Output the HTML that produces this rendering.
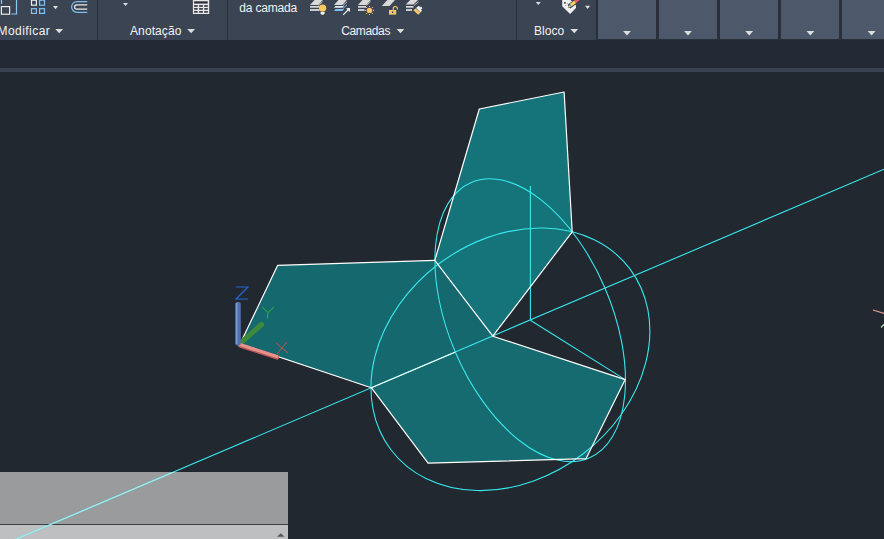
<!DOCTYPE html>
<html><head><meta charset="utf-8">
<style>
html,body{margin:0;padding:0;background:#212830;}
body{width:884px;height:539px;overflow:hidden;position:relative;font-family:"Liberation Sans",sans-serif;font-size:12px;color:#f0f0f0;}
#ribbon{position:absolute;left:0;top:0;width:884px;height:40px;background:#3b4453;}
#band{position:absolute;left:0;top:40px;width:884px;height:28px;background:#232a35;}
#stripe{position:absolute;left:0;top:68px;width:884px;height:4px;background:#3a4150;}
.sep{position:absolute;top:0;width:1px;height:40px;background:#2a303b;}
.lbl{position:absolute;top:24px;line-height:14px;white-space:nowrap;color:#f2f2f2;}
.tri{position:absolute;width:0;height:0;border-left:4px solid transparent;border-right:4px solid transparent;border-top:4.5px solid #dcdcdc;}
.tris{position:absolute;width:0;height:0;border-left:2.5px solid transparent;border-right:2.5px solid transparent;border-top:3px solid #dcdcdc;}
.pan{position:absolute;top:0;height:39px;width:58px;background:#4d596b;}
#panbg{position:absolute;left:596px;top:0;width:288px;height:40px;background:#2a303b;}
#cmd{position:absolute;left:0;top:472px;width:288px;height:52px;background:#9a9b9d;}
#cmdline{position:absolute;left:0;top:524px;width:288px;height:1px;background:#3a3e45;}
#cmd2{position:absolute;left:0;top:525px;width:288px;height:14px;background:#bdbfc1;}
svg{position:absolute;left:0;top:0;}
</style></head><body>
<div id="ribbon"></div>
<div id="band"></div>
<div id="stripe"></div>
<div class="sep" style="left:97px"></div>
<div class="sep" style="left:227px"></div>
<div class="sep" style="left:516px"></div>
<div id="panbg"></div>
<div class="pan" style="left:598px"></div>
<div class="pan" style="left:659px"></div>
<div class="pan" style="left:720px"></div>
<div class="pan" style="left:781px"></div>
<div class="pan" style="left:842px"></div>

<div class="lbl" style="left:-2.5px;letter-spacing:0.45px">Modificar</div>
<div class="lbl" style="left:130px;letter-spacing:0.1px">Anotação</div>
<div class="lbl" style="left:239.3px;top:1px;letter-spacing:-0.2px">da camada</div>
<div class="lbl" style="left:341.2px;letter-spacing:-0.35px">Camadas</div>
<div class="lbl" style="left:534px;letter-spacing:0.05px">Bloco</div>

<svg id="icons" width="884" height="40" viewBox="0 0 884 40" fill="none">
<polygon points="55.3,28.9 63.1,28.9 59.150000000000006,33.199999999999996" fill="#dedede"/>
<polygon points="187.2,28.9 195.0,28.9 191.10000000000002,33.199999999999996" fill="#dedede"/>
<polygon points="396.6,28.9 404.3,28.9 400.45,33.199999999999996" fill="#dedede"/>
<polygon points="570.4,28.9 578.2,28.9 574.3,33.199999999999996" fill="#dedede"/>
<polygon points="623.1,31.1 630.9,31.1 627,35.4" fill="#dedede"/>
<polygon points="684.1,31.1 691.9,31.1 688,35.4" fill="#dedede"/>
<polygon points="745.3,31.1 753.1,31.1 749.2,35.4" fill="#dedede"/>
<polygon points="806.5,31.1 814.3,31.1 810.4,35.4" fill="#dedede"/>
<polygon points="867.7,31.1 875.5,31.1 871.6,35.4" fill="#dedede"/>
<polygon points="53.0,6.1 58.0,6.1 55.5,9.2" fill="#dedede"/>
<polygon points="123.0,3 128.0,3 125.5,6.1" fill="#dedede"/>
<polygon points="535.8,2 540.8,2 538.3,5.1" fill="#dedede"/>
<polygon points="585.1,5.8 590.1,5.8 587.6,8.9" fill="#dedede"/>
<!-- icon1 -->
<rect x="1.4" y="6.6" width="8.2" height="7.6" stroke="#ececec" stroke-width="1.2"/>
<polyline points="11.3,14 16.5,14 16.5,0" stroke="#8cc6f2" stroke-width="1.2"/>
<line x1="1.5" y1="0" x2="1.5" y2="4" stroke="#8cc6f2" stroke-width="1.2"/>
<!-- grid -->
<rect x="31.5" y="0.2" width="4.9" height="5" stroke="#ececec" stroke-width="1.2"/>
<rect x="39.6" y="0.2" width="4.9" height="5" stroke="#86c0f0" stroke-width="1.2"/>
<rect x="31.5" y="8.7" width="4.9" height="4.7" stroke="#86c0f0" stroke-width="1.2"/>
<rect x="39.6" y="8.7" width="4.9" height="4.7" stroke="#86c0f0" stroke-width="1.2"/>
<!-- offset icon -->
<path d="M87.2,1.6 H77 A5.35,5.35 0 0 0 77,12.3 H87.2" stroke="#7fbdee" stroke-width="1.2"/>
<path d="M87.2,4.8 H76.8 A2.2,2.2 0 0 0 76.8,9.2 H87.2" stroke="#ececec" stroke-width="1.2"/>
<!-- table -->
<rect x="192.9" y="0" width="16.3" height="14" fill="#e8e8e8"/>
<g fill="#2b303b">
<rect x="194.1" y="1.3" width="13.6" height="2.3"/>
<rect x="194.1" y="5.2" width="3.6" height="1.6"/><rect x="199.1" y="5.2" width="3.8" height="1.6"/><rect x="204.2" y="5.2" width="3.6" height="1.6"/>
<rect x="194.1" y="8.1" width="3.6" height="1.6"/><rect x="199.1" y="8.1" width="3.8" height="1.6"/><rect x="204.2" y="8.1" width="3.6" height="1.6"/>
<rect x="194.1" y="11.1" width="3.6" height="1.6"/><rect x="199.1" y="11.1" width="3.8" height="1.6"/><rect x="204.2" y="11.1" width="3.6" height="1.6"/>
</g>
<!-- layer icon 1 : bulb -->
<g fill="#d9d9d9">
<polygon points="310,5 314.5,0 322.8,0 318.3,5"/>
<rect x="310" y="6" width="9.5" height="1.7"/><rect x="310" y="9.1" width="9.5" height="1.8"/>
</g>
<line x1="318.5" y1="5.5" x2="322.5" y2="1.8" stroke="#d9d9d9" stroke-width="0.8"/>
<circle cx="322.6" cy="8.1" r="3.7" fill="#f9c764"/>
<path d="M320.6,12.1 H324.6 V13.2 L323.5,14.7 H321.7 L320.6,13.2 Z" fill="#f4f4f4"/>
<!-- layer icon 2 : arrow -->
<polygon points="334,5 338.5,0 346.8,0 342.3,5" fill="#d9d9d9"/>
<polygon points="334,7.7 342.5,7.7 344,6 335.5,6" fill="#e4eef6"/>
<polygon points="334,10.9 342.5,10.9 344,9.1 335.5,9.1" fill="#7fbdee"/>
<line x1="343" y1="5.5" x2="347" y2="1.8" stroke="#d9d9d9" stroke-width="0.8"/>
<line x1="343" y1="8.5" x2="347" y2="4.8" stroke="#a8cdea" stroke-width="0.8"/>
<line x1="343.2" y1="14.8" x2="349" y2="9" stroke="#f4f4f4" stroke-width="1.2"/>
<polygon points="350,8 349.8,12 346,8.2" fill="#f4f4f4"/>
<!-- layer icon 3 : sun -->
<g fill="#d9d9d9">
<polygon points="358,5 362.5,0 370.8,0 366.3,5"/>
<rect x="358" y="6" width="8" height="1.7"/><rect x="358" y="9.1" width="6.5" height="1.8"/>
</g>
<line x1="366.5" y1="5.5" x2="370.5" y2="1.8" stroke="#d9d9d9" stroke-width="0.8"/>
<circle cx="369.5" cy="10.4" r="2.7" fill="#f9c764"/>
<g fill="#f9c764">
<circle cx="369.5" cy="6.3" r="0.6"/><circle cx="369.5" cy="14.5" r="0.6"/><circle cx="365.4" cy="10.4" r="0.6"/><circle cx="373.6" cy="10.4" r="0.6"/>
<circle cx="366.6" cy="7.5" r="0.6"/><circle cx="372.4" cy="7.5" r="0.6"/><circle cx="366.6" cy="13.3" r="0.6"/><circle cx="372.4" cy="13.3" r="0.6"/>
</g>
<!-- layer icon 4 : lock -->
<polygon points="381.8,5.9 387.3,0 395,0 389.5,5.9" fill="#d9d9d9"/>
<rect x="389" y="10" width="7.2" height="4.6" fill="#f9c764"/>
<rect x="391.9" y="11.4" width="1.4" height="1.6" fill="#3b4453"/>
<path d="M393.2,10 V8.6 A2.1,2.1 0 0 1 397.4,8.6 V9.4" stroke="#f9c764" stroke-width="1.1"/>
<!-- layer icon 5 : brush -->
<g fill="#d9d9d9">
<polygon points="405.7,4.6 410.2,0 418,0 413.5,4.6"/>
<rect x="406" y="6" width="7.5" height="1.7"/><rect x="406" y="9.1" width="6" height="1.8"/>
</g>
<line x1="414" y1="5.5" x2="418.5" y2="1.8" stroke="#d9d9d9" stroke-width="0.8"/>
<polygon points="413.4,10.3 415.6,8.4 420.6,12.6 418.2,14.8" fill="#f9c764"/>
<polygon points="416,8 418.8,5.8 420.2,7.2 421.4,6.4 422.4,8.4 421,9.2 422,10.8 420.6,12.2" fill="#eeeeee"/>
<!-- tag icon -->
<polygon points="562.2,0 570.5,0 576,5.5 576,8 570.1,13.9 562.2,6.2" fill="#f0f0f0"/>
<circle cx="564.9" cy="2.8" r="0.9" fill="#222"/>
<circle cx="565.6" cy="5.4" r="0.45" fill="#555"/>
<circle cx="567.6" cy="3.4" r="0.45" fill="#555"/>
<line x1="569" y1="6.6" x2="578.5" y2="-0.6" stroke="#3b4453" stroke-width="4.6"/>
<line x1="570.6" y1="5.3" x2="575.2" y2="1.7" stroke="#f6cf5e" stroke-width="3"/>
<line x1="575.2" y1="1.7" x2="578.5" y2="-0.9" stroke="#ee5a66" stroke-width="3"/>
<polygon points="569.6,4.1 571.5,6.5 568.6,7.6" fill="#f8f8f8" stroke="#333" stroke-width="0.5"/>
</svg>
<div id="cmd"></div><div id="cmdline"></div><div id="cmd2"></div>

<svg width="884" height="539" viewBox="0 0 884 539">
<defs><clipPath id="dw"><rect x="0" y="72" width="884" height="467"/></clipPath><clipPath id="cp"><rect x="0" y="472" width="288" height="67"/></clipPath></defs>
<g clip-path="url(#dw)" fill="none">
<!-- pentagons -->
<polygon points="479.3,109 564.1,92 572.2,231.8 492.8,336.2 434.8,260.4" fill="#157479"/>
<polygon points="240,344 277.7,265.3 434.8,260.4 492.8,336.2 371.3,387.7" fill="#15686d"/>
<polygon points="371.3,387.7 492.8,336.2 625.2,379.6 586,458.7 428.1,463.1" fill="#156b70"/>
<!-- cyan -->
<g stroke="#38e8ee" stroke-width="1.1">
<line x1="884" y1="169.2" x2="0" y2="546"/>
<line x1="530.4" y1="186" x2="530.4" y2="320.2"/>
<line x1="530.4" y1="320.2" x2="625.2" y2="379.6"/>
<ellipse cx="510.4" cy="359.3" rx="119.3" ry="149.85" transform="rotate(52.77 510.4 359.3)"/>
<ellipse cx="530.2" cy="320.2" rx="81.4" ry="149.85" transform="rotate(156.83 530.2 320.2)"/>
</g>
<!-- white edges -->
<g stroke="#ffffff" stroke-width="1.2" stroke-linejoin="round">
<polygon points="479.3,109 564.1,92 572.2,231.8 492.8,336.2 434.8,260.4"/>
<polyline points="434.8,260.4 277.7,265.3 240,344 371.3,387.7 455,352.2"/>
<polyline points="371.3,387.7 428.1,463.1 586,458.7 625.2,379.6 492.8,336.2"/>
</g>
<!-- UCS -->
<line x1="240.5" y1="343" x2="261.5" y2="324.5" stroke="#3f8a3a" stroke-width="5" stroke-linecap="round"/>
<line x1="240" y1="345.6" x2="277" y2="357.6" stroke="#b85a58" stroke-width="4.2" stroke-linecap="round"/><line x1="240" y1="344.6" x2="277" y2="356.6" stroke="#e8908b" stroke-width="3.2" stroke-linecap="round"/>
<rect x="235.3" y="302" width="5.5" height="43.5" rx="2" fill="#4f72b0"/>
<rect x="235.8" y="303" width="1.6" height="41" fill="#7d9bd0"/>
<g stroke="#2a62d8" stroke-width="1.2"><polyline points="236,287 248,287 236,299 248,299"/></g>
<g stroke="#2fb53a" stroke-width="1"><polyline points="262,307 268,312.5 274,307"/><line x1="268" y1="312.5" x2="267.5" y2="318.5"/></g>
<g stroke="#c2534c" stroke-width="1"><line x1="276" y1="343" x2="288" y2="353"/><line x1="287" y1="342" x2="277" y2="354"/></g>
<!-- right marks -->
<line x1="873" y1="310" x2="884" y2="313.5" stroke="#e89a96" stroke-width="1.2"/>
<line x1="881" y1="327.5" x2="884" y2="324.5" stroke="#bfe0c0" stroke-width="1.2"/>
</g>
<line x1="884" y1="169.2" x2="0" y2="546" stroke="#a9ecee" stroke-width="1.1" clip-path="url(#cp)"/>
<polygon points="277,536.8 284.6,536.8 280.8,533.2" fill="#55585c"/>
</svg>
</body></html>
